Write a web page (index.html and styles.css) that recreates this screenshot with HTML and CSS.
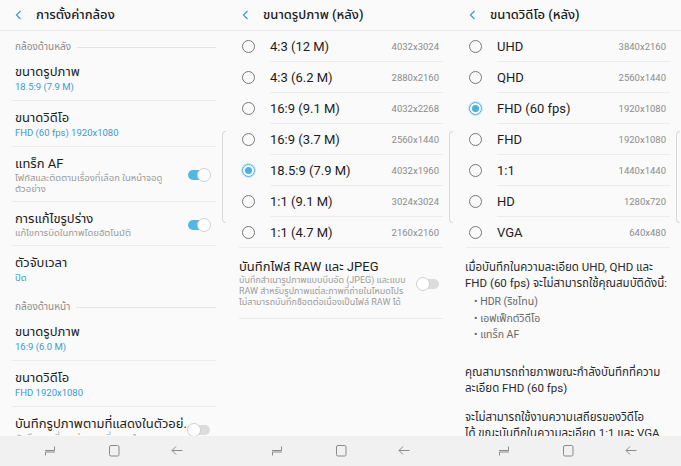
FILE: index.html
```html
<!DOCTYPE html>
<html lang="th">
<head>
<meta charset="utf-8">
<link rel="stylesheet" href="styles.css">
</head>
<body>
<div class="screens">

  <!-- Panel 1 -->
  <section class="panel">
    <header class="bar">
      <svg class="chev" viewBox="0 0 7 10" width="7" height="10"><path d="M5.5 1 L1.5 5 L5.5 9" /></svg>
      <h1 class="title">การตั้งค่ากล้อง</h1>
    </header>
    <div class="content">
      <div class="sect"><span>กล้องด้านหลัง</span><i class="sect-line"></i></div>
      <div class="item"><div class="item-text"><div class="it">ขนาดรูปภาพ</div><div class="sub">18.5:9 (7.9 M)</div></div></div>
      <div class="item"><div class="item-text"><div class="it">ขนาดวิดีโอ</div><div class="sub">FHD (60 fps) 1920x1080</div></div></div>
      <div class="item"><div class="item-text"><div class="it">แทร็ก AF</div><div class="desc wide">โฟกัสและติดตามเรื่องที่เลือก ในหน้าจอดู<br>ตัวอย่าง</div></div><span class="tog on"></span></div>
      <div class="item"><div class="item-text"><div class="it">การแก้ไขรูปร่าง</div><div class="desc wide">แก้ไขการบิดในภาพโดยอัตโนมัติ</div></div><span class="tog on"></span></div>
      <div class="item last"><div class="item-text"><div class="it">ตัวจับเวลา</div><div class="sub">ปิด</div></div></div>
      <div class="sect"><span>กล้องด้านหน้า</span><i class="sect-line"></i></div>
      <div class="item"><div class="item-text"><div class="it">ขนาดรูปภาพ</div><div class="sub">16:9 (6.0 M)</div></div></div>
      <div class="item"><div class="item-text"><div class="it">ขนาดวิดีโอ</div><div class="sub">FHD 1920x1080</div></div></div>
      <div class="item"><div class="item-text"><div class="it">บันทึกรูปภาพตามที่แสดงในตัวอย่..</div><div class="desc wide">บันทึกภาพที่คุณถ่ายตามที่แสดงใน</div></div><span class="tog"></span></div>
    </div>
    <i class="edge"></i>
    <nav class="nav">
      <svg viewBox="0 0 12 12" width="12" height="12"><path d="M1 5.5H10.5V1.5 M1.5 10.5V7H11" /></svg>
      <svg viewBox="0 0 12 12" width="12" height="12"><rect x="1.5" y="0.5" width="9.5" height="10.5" rx="1.5" /></svg>
      <svg viewBox="0 0 12 12" width="12" height="12"><path d="M11.5 5.5H1 M5 1.5 L1 5.5 L5 9.5" /></svg>
    </nav>
  </section>

  <!-- Panel 2 -->
  <section class="panel">
    <header class="bar">
      <svg class="chev" viewBox="0 0 7 10" width="7" height="10"><path d="M5.5 1 L1.5 5 L5.5 9" /></svg>
      <h1 class="title">ขนาดรูปภาพ (หลัง)</h1>
    </header>
    <div class="content">
      <div class="opts">
        <div class="opt"><span class="radio"></span><div class="opt-body"><span class="lbl">4:3 (12 M)</span><span class="res">4032x3024</span></div></div>
        <div class="opt"><span class="radio"></span><div class="opt-body"><span class="lbl">4:3 (6.2 M)</span><span class="res">2880x2160</span></div></div>
        <div class="opt"><span class="radio"></span><div class="opt-body"><span class="lbl">16:9 (9.1 M)</span><span class="res">4032x2268</span></div></div>
        <div class="opt"><span class="radio"></span><div class="opt-body"><span class="lbl">16:9 (3.7 M)</span><span class="res">2560x1440</span></div></div>
        <div class="opt"><span class="radio sel"></span><div class="opt-body"><span class="lbl">18.5:9 (7.9 M)</span><span class="res">4032x1960</span></div></div>
        <div class="opt"><span class="radio"></span><div class="opt-body"><span class="lbl">1:1 (9.1 M)</span><span class="res">3024x3024</span></div></div>
        <div class="opt last"><span class="radio"></span><div class="opt-body"><span class="lbl">1:1 (4.7 M)</span><span class="res">2160x2160</span></div></div>
      </div>
      <div class="raw">
        <div class="raw-text">
          <div class="it">บันทึกไฟล์ RAW และ JPEG</div>
          <div class="desc">บันทึกสำเนารูปภาพแบบบีบอัด (JPEG) และแบบ<br>RAW สำหรับรูปภาพแต่ละภาพที่ถ่ายในโหมดโปร<br>ไม่สามารถบันทึกช็อตต่อเนื่องเป็นไฟล์ RAW ได้</div>
        </div>
        <span class="tog"></span>
      </div>
    </div>
    <i class="edge"></i>
    <nav class="nav">
      <svg viewBox="0 0 12 12" width="12" height="12"><path d="M1 5.5H10.5V1.5 M1.5 10.5V7H11" /></svg>
      <svg viewBox="0 0 12 12" width="12" height="12"><rect x="1.5" y="0.5" width="9.5" height="10.5" rx="1.5" /></svg>
      <svg viewBox="0 0 12 12" width="12" height="12"><path d="M11.5 5.5H1 M5 1.5 L1 5.5 L5 9.5" /></svg>
    </nav>
  </section>

  <!-- Panel 3 -->
  <section class="panel">
    <header class="bar">
      <svg class="chev" viewBox="0 0 7 10" width="7" height="10"><path d="M5.5 1 L1.5 5 L5.5 9" /></svg>
      <h1 class="title">ขนาดวิดีโอ (หลัง)</h1>
    </header>
    <div class="content">
      <div class="opts">
        <div class="opt"><span class="radio"></span><div class="opt-body"><span class="lbl">UHD</span><span class="res">3840x2160</span></div></div>
        <div class="opt"><span class="radio"></span><div class="opt-body"><span class="lbl">QHD</span><span class="res">2560x1440</span></div></div>
        <div class="opt"><span class="radio sel"></span><div class="opt-body"><span class="lbl">FHD (60 fps)</span><span class="res">1920x1080</span></div></div>
        <div class="opt"><span class="radio"></span><div class="opt-body"><span class="lbl">FHD</span><span class="res">1920x1080</span></div></div>
        <div class="opt"><span class="radio"></span><div class="opt-body"><span class="lbl">1:1</span><span class="res">1440x1440</span></div></div>
        <div class="opt"><span class="radio"></span><div class="opt-body"><span class="lbl">HD</span><span class="res">1280x720</span></div></div>
        <div class="opt last"><span class="radio"></span><div class="opt-body"><span class="lbl">VGA</span><span class="res">640x480</span></div></div>
      </div>
      <div class="info">
        <p class="para">เมื่อบันทึกในความละเอียด UHD, QHD และ<br>FHD (60 fps) จะไม่สามารถใช้คุณสมบัติดังนี้:</p>
        <ul class="bullets">
          <li>HDR (ริชโทน)</li>
          <li>เอฟเฟ็กต์วิดีโอ</li>
          <li>แทร็ก AF</li>
        </ul>
        <p class="para">คุณสามารถถ่ายภาพขณะกำลังบันทึกที่ความ<br>ละเอียด FHD (60 fps)</p>
        <p class="para p3">จะไม่สามารถใช้งานความเสถียรของวิดีโอ<br>ได้ ขณะบันทึกในความละเอียด 1:1 และ VGA</p>
      </div>
    </div>
    <i class="edge"></i>
    <nav class="nav">
      <svg viewBox="0 0 12 12" width="12" height="12"><path d="M1 5.5H10.5V1.5 M1.5 10.5V7H11" /></svg>
      <svg viewBox="0 0 12 12" width="12" height="12"><rect x="1.5" y="0.5" width="9.5" height="10.5" rx="1.5" /></svg>
      <svg viewBox="0 0 12 12" width="12" height="12"><path d="M11.5 5.5H1 M5 1.5 L1 5.5 L5 9.5" /></svg>
    </nav>
  </section>

</div>
</body>
</html>
```

FILE: styles.css
```css
* { box-sizing: border-box; }
html, body { margin: 0; padding: 0; }
body {
  width: 681px;
  height: 466px;
  overflow: hidden;
  background: #fafafa;
  font-family: Roboto, "Noto Sans Thai", "Noto Sans", "DejaVu Sans", sans-serif;
  color: #1e1e1e;
}
.screens {
  display: grid;
  grid-template-columns: 227px 227px 227px;
  height: 466px;
}
.panel {
  position: relative;
  display: flex;
  flex-direction: column;
  height: 466px;
  overflow: hidden;
  background: #fafafa;
}
.bar {
  height: 31px;
  flex: none;
  display: flex;
  align-items: center;
  border-bottom: 1px solid #e9e9e9;
  padding-left: 15px;
}
.chev { fill: none; stroke: #3f9ed3; stroke-width: 1.3; margin-right: 14px; }
.title {
  margin: 0;
  font-size: 13px;
  font-weight: 500;
  color: #1b1b1b;
  line-height: 16px;
}
.content {
  flex: 1;
  overflow: hidden;
}

/* panel 1 */
.sect {
  padding: 8px 11px 0 15px;
  display: flex;
  align-items: center;
  height: 24px;
  font-size: 10px;
  line-height: 14px;
  color: #8a8a8a;
}
.sect span { height: 14px; }
.sect-line {
  flex: 1;
  height: 1.5px;
  background: #e4e4e4;
  margin-left: 6px;
  margin-top: 1px;
}
.item {
  margin: 0 11px 0 12px;
  padding: 9px 5px 7px 3px;
  border-bottom: 1px solid #ececec;
  display: flex;
  align-items: center;
}
.item.last { border-bottom: none; }
.item-text { flex: 1; min-width: 0; }
.it {
  font-size: 13px;
  line-height: 16px;
  color: #1c1c1c;
  white-space: nowrap;
}
.sub {
  font-size: 9.5px;
  line-height: 13px;
  color: #3e99cd;
}
.desc {
  font-size: 9px;
  line-height: 11px;
  color: #9a9a9a;
  white-space: nowrap;
}
.desc.wide { font-size: 9.5px; }
.tog {
  flex: none;
  position: relative;
  width: 24px;
  height: 14px;
}
.tog::before {
  content: "";
  position: absolute;
  left: 1px; right: 1px; top: 2px; height: 10px;
  border-radius: 5px;
  background: #dcdcdc;
}
.tog::after {
  content: "";
  position: absolute;
  left: 0; top: 0;
  width: 14px; height: 14px;
  border-radius: 50%;
  background: #fff;
  border: 1px solid #cfcfcf;
  box-sizing: border-box;
}
.tog.on::before { background: #54b7e3; }
.tog.on::after { left: auto; right: 0; border-color: #d0d0d0; }

/* panels 2 and 3 */
.opt {
  display: flex;
  margin: 0 11px 0 12px;
  height: 31px;
}
.radio {
  flex: none;
  width: 13px;
  height: 13px;
  margin: 9px 15px 0 3px;
  border: 1.3px solid #777;
  border-radius: 50%;
  position: relative;
}
.radio.sel {
  border: 1.5px solid #49b0e0;
  box-shadow: 0 0 0 1px rgba(73,176,224,0.25);
}
.radio.sel::after {
  content: "";
  position: absolute;
  left: 1.5px; top: 1.5px;
  width: 7px; height: 7px;
  border-radius: 50%;
  background: #49b0e0;
}
.opt-body {
  flex: 1;
  display: flex;
  justify-content: space-between;
  align-items: center;
  border-bottom: 1px solid #ebebeb;
  padding-right: 4px;
}
.opt.last { border-bottom: 1px solid #ebebeb; }
.opt.last .opt-body { border-bottom: none; }
.lbl {
  font-size: 13px;
  color: #1c1c1c;
}
.res {
  font-size: 9.5px;
  color: #8c8c8c;
}
.raw {
  margin: 0 11px 0 12px;
  padding: 11px 3px 10px 0;
  border-bottom: 1px solid #ebebeb;
  display: flex;
  align-items: center;
}
.raw-text { flex: 1; }

.info {
  padding: 11px 10px 0 11px;
}
.para {
  margin: 0;
  font-size: 11.5px;
  line-height: 16px;
  color: #2a2a2a;
  white-space: nowrap;
}
.bullets {
  list-style: none;
  margin: 3px 0 20px 0;
  padding: 0 0 0 9px;
  font-size: 10.5px;
  line-height: 16.5px;
  color: #666;
}
.bullets li::before { content: "• "; }
.p3 { margin-top: 13px; }

.edge {
  position: absolute;
  right: 1px;
  top: 131px;
  width: 4px;
  height: 92px;
  border: 1px solid #dadada;
  border-right: none;
  border-radius: 5px 0 0 5px;
}

.nav {
  flex: none;
  height: 30px;
  background: #f1f1f1;
  display: flex;
  align-items: center;
  justify-content: space-between;
  padding: 0 44px 0 44px;
}
.nav svg {
  fill: none;
  stroke: #8a8a8a;
  stroke-width: 1;
}
```
